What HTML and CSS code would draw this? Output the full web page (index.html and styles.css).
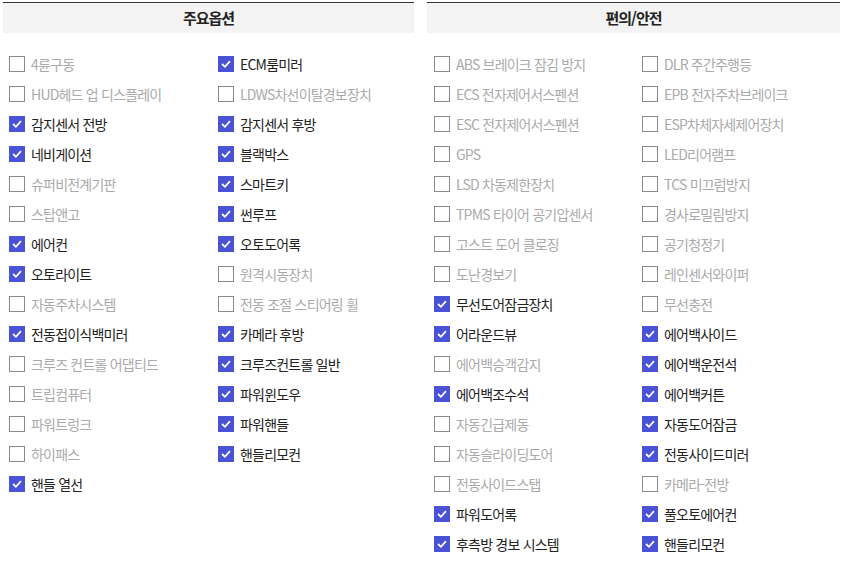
FILE: index.html
```html
<!DOCTYPE html>
<html lang="ko">
<head>
    <meta charset="UTF-8">
    <meta name="viewport" content="width=device-width, initial-scale=1.0">
    <title>차량 옵션</title>
    <link rel="stylesheet" href="styles.css">
</head>
<body>
    <div class="options">
        <!-- 주요옵션 -->
        <section class="panel panel-main">
            <h2 class="panel-title">주요옵션</h2>
            <ul class="opt-list">
                <li class="opt"><span class="box"></span>4륜구동</li>
                <li class="opt on"><span class="box"><svg viewBox="0 0 16 16"><polyline points="3.5,8 6.8,11.2 12.5,4.8"/></svg></span>ECM룸미러</li>
                <li class="opt"><span class="box"></span>HUD헤드 업 디스플레이</li>
                <li class="opt"><span class="box"></span>LDWS차선이탈경보장치</li>
                <li class="opt on"><span class="box"><svg viewBox="0 0 16 16"><polyline points="3.5,8 6.8,11.2 12.5,4.8"/></svg></span>감지센서 전방</li>
                <li class="opt on"><span class="box"><svg viewBox="0 0 16 16"><polyline points="3.5,8 6.8,11.2 12.5,4.8"/></svg></span>감지센서 후방</li>
                <li class="opt on"><span class="box"><svg viewBox="0 0 16 16"><polyline points="3.5,8 6.8,11.2 12.5,4.8"/></svg></span>네비게이션</li>
                <li class="opt on"><span class="box"><svg viewBox="0 0 16 16"><polyline points="3.5,8 6.8,11.2 12.5,4.8"/></svg></span>블랙박스</li>
                <li class="opt"><span class="box"></span>슈퍼비전계기판</li>
                <li class="opt on"><span class="box"><svg viewBox="0 0 16 16"><polyline points="3.5,8 6.8,11.2 12.5,4.8"/></svg></span>스마트키</li>
                <li class="opt"><span class="box"></span>스탑앤고</li>
                <li class="opt on"><span class="box"><svg viewBox="0 0 16 16"><polyline points="3.5,8 6.8,11.2 12.5,4.8"/></svg></span>썬루프</li>
                <li class="opt on"><span class="box"><svg viewBox="0 0 16 16"><polyline points="3.5,8 6.8,11.2 12.5,4.8"/></svg></span>에어컨</li>
                <li class="opt on"><span class="box"><svg viewBox="0 0 16 16"><polyline points="3.5,8 6.8,11.2 12.5,4.8"/></svg></span>오토도어록</li>
                <li class="opt on"><span class="box"><svg viewBox="0 0 16 16"><polyline points="3.5,8 6.8,11.2 12.5,4.8"/></svg></span>오토라이트</li>
                <li class="opt"><span class="box"></span>원격시동장치</li>
                <li class="opt"><span class="box"></span>자동주차시스템</li>
                <li class="opt"><span class="box"></span>전동 조절 스티어링 휠</li>
                <li class="opt on"><span class="box"><svg viewBox="0 0 16 16"><polyline points="3.5,8 6.8,11.2 12.5,4.8"/></svg></span>전동접이식백미러</li>
                <li class="opt on"><span class="box"><svg viewBox="0 0 16 16"><polyline points="3.5,8 6.8,11.2 12.5,4.8"/></svg></span>카메라 후방</li>
                <li class="opt"><span class="box"></span>크루즈 컨트롤 어댑티드</li>
                <li class="opt on"><span class="box"><svg viewBox="0 0 16 16"><polyline points="3.5,8 6.8,11.2 12.5,4.8"/></svg></span>크루즈컨트롤 일반</li>
                <li class="opt"><span class="box"></span>트립컴퓨터</li>
                <li class="opt on"><span class="box"><svg viewBox="0 0 16 16"><polyline points="3.5,8 6.8,11.2 12.5,4.8"/></svg></span>파워윈도우</li>
                <li class="opt"><span class="box"></span>파워트렁크</li>
                <li class="opt on"><span class="box"><svg viewBox="0 0 16 16"><polyline points="3.5,8 6.8,11.2 12.5,4.8"/></svg></span>파워핸들</li>
                <li class="opt"><span class="box"></span>하이패스</li>
                <li class="opt on"><span class="box"><svg viewBox="0 0 16 16"><polyline points="3.5,8 6.8,11.2 12.5,4.8"/></svg></span>핸들리모컨</li>
                <li class="opt on"><span class="box"><svg viewBox="0 0 16 16"><polyline points="3.5,8 6.8,11.2 12.5,4.8"/></svg></span>핸들 열선</li>
            </ul>
        </section>

        <!-- 편의/안전 -->
        <section class="panel panel-safe">
            <h2 class="panel-title">편의/안전</h2>
            <ul class="opt-list">
                <li class="opt"><span class="box"></span>ABS 브레이크 잠김 방지</li>
                <li class="opt"><span class="box"></span>DLR 주간주행등</li>
                <li class="opt"><span class="box"></span>ECS 전자제어서스펜션</li>
                <li class="opt"><span class="box"></span>EPB 전자주차브레이크</li>
                <li class="opt"><span class="box"></span>ESC 전자제어서스펜션</li>
                <li class="opt"><span class="box"></span>ESP차체자세제어장치</li>
                <li class="opt"><span class="box"></span>GPS</li>
                <li class="opt"><span class="box"></span>LED리어램프</li>
                <li class="opt"><span class="box"></span>LSD 차동제한장치</li>
                <li class="opt"><span class="box"></span>TCS 미끄럼방지</li>
                <li class="opt"><span class="box"></span>TPMS 타이어 공기압센서</li>
                <li class="opt"><span class="box"></span>경사로밀림방지</li>
                <li class="opt"><span class="box"></span>고스트 도어 클로징</li>
                <li class="opt"><span class="box"></span>공기청정기</li>
                <li class="opt"><span class="box"></span>도난경보기</li>
                <li class="opt"><span class="box"></span>레인센서와이퍼</li>
                <li class="opt on"><span class="box"><svg viewBox="0 0 16 16"><polyline points="3.5,8 6.8,11.2 12.5,4.8"/></svg></span>무선도어잠금장치</li>
                <li class="opt"><span class="box"></span>무선충전</li>
                <li class="opt on"><span class="box"><svg viewBox="0 0 16 16"><polyline points="3.5,8 6.8,11.2 12.5,4.8"/></svg></span>어라운드뷰</li>
                <li class="opt on"><span class="box"><svg viewBox="0 0 16 16"><polyline points="3.5,8 6.8,11.2 12.5,4.8"/></svg></span>에어백사이드</li>
                <li class="opt"><span class="box"></span>에어백승객감지</li>
                <li class="opt on"><span class="box"><svg viewBox="0 0 16 16"><polyline points="3.5,8 6.8,11.2 12.5,4.8"/></svg></span>에어백운전석</li>
                <li class="opt on"><span class="box"><svg viewBox="0 0 16 16"><polyline points="3.5,8 6.8,11.2 12.5,4.8"/></svg></span>에어백조수석</li>
                <li class="opt on"><span class="box"><svg viewBox="0 0 16 16"><polyline points="3.5,8 6.8,11.2 12.5,4.8"/></svg></span>에어백커튼</li>
                <li class="opt"><span class="box"></span>자동긴급제동</li>
                <li class="opt on"><span class="box"><svg viewBox="0 0 16 16"><polyline points="3.5,8 6.8,11.2 12.5,4.8"/></svg></span>자동도어잠금</li>
                <li class="opt"><span class="box"></span>자동슬라이딩도어</li>
                <li class="opt on"><span class="box"><svg viewBox="0 0 16 16"><polyline points="3.5,8 6.8,11.2 12.5,4.8"/></svg></span>전동사이드미러</li>
                <li class="opt"><span class="box"></span>전동사이드스탭</li>
                <li class="opt"><span class="box"></span>카메라-전방</li>
                <li class="opt on"><span class="box"><svg viewBox="0 0 16 16"><polyline points="3.5,8 6.8,11.2 12.5,4.8"/></svg></span>파워도어록</li>
                <li class="opt on"><span class="box"><svg viewBox="0 0 16 16"><polyline points="3.5,8 6.8,11.2 12.5,4.8"/></svg></span>풀오토에어컨</li>
                <li class="opt on"><span class="box"><svg viewBox="0 0 16 16"><polyline points="3.5,8 6.8,11.2 12.5,4.8"/></svg></span>후측방 경보 시스템</li>
                <li class="opt on"><span class="box"><svg viewBox="0 0 16 16"><polyline points="3.5,8 6.8,11.2 12.5,4.8"/></svg></span>핸들리모컨</li>
            </ul>
        </section>
    </div>
</body>
</html>
```

FILE: styles.css
```css
body {
    font-family: "Noto Sans CJK KR", "Noto Sans", sans-serif;
    margin: 0;
    padding: 0;
    background-color: #fff;
    color: #222;
}

.options {
    display: grid;
    grid-template-columns: 411px 413px;
    column-gap: 13px;
    padding: 2px 3px 0;
}

.panel-title {
    margin: 0;
    height: 30px;
    line-height: 29px;
    border-top: 1px solid #333;
    background-color: #f3f3f3;
    text-align: center;
    font-size: 15px;
    font-weight: 700;
    letter-spacing: -1px;
    color: #222;
}

.opt-list {
    list-style: none;
    margin: 16px 0 0;
    padding: 0 0 0 6px;
    display: grid;
    grid-template-columns: 209px 1fr;
}

.panel-safe .opt-list {
    padding-left: 7px;
    grid-template-columns: 208px 1fr;
}

.opt {
    display: flex;
    align-items: center;
    height: 30px;
    font-size: 14px;
    letter-spacing: -0.8px;
    color: #aaa;
    white-space: nowrap;
}

.opt.on {
    color: #222;
}

.box {
    flex: none;
    width: 14px;
    height: 14px;
    border: 1px solid #8a8a8a;
    background-color: #fff;
    margin-right: 6px;
    display: flex;
}

.opt.on .box {
    border-color: #4a52d6;
    background-color: #4a52d6;
}

.box svg {
    width: 14px;
    height: 14px;
    fill: none;
    stroke: #fff;
    stroke-width: 2;
}
```
